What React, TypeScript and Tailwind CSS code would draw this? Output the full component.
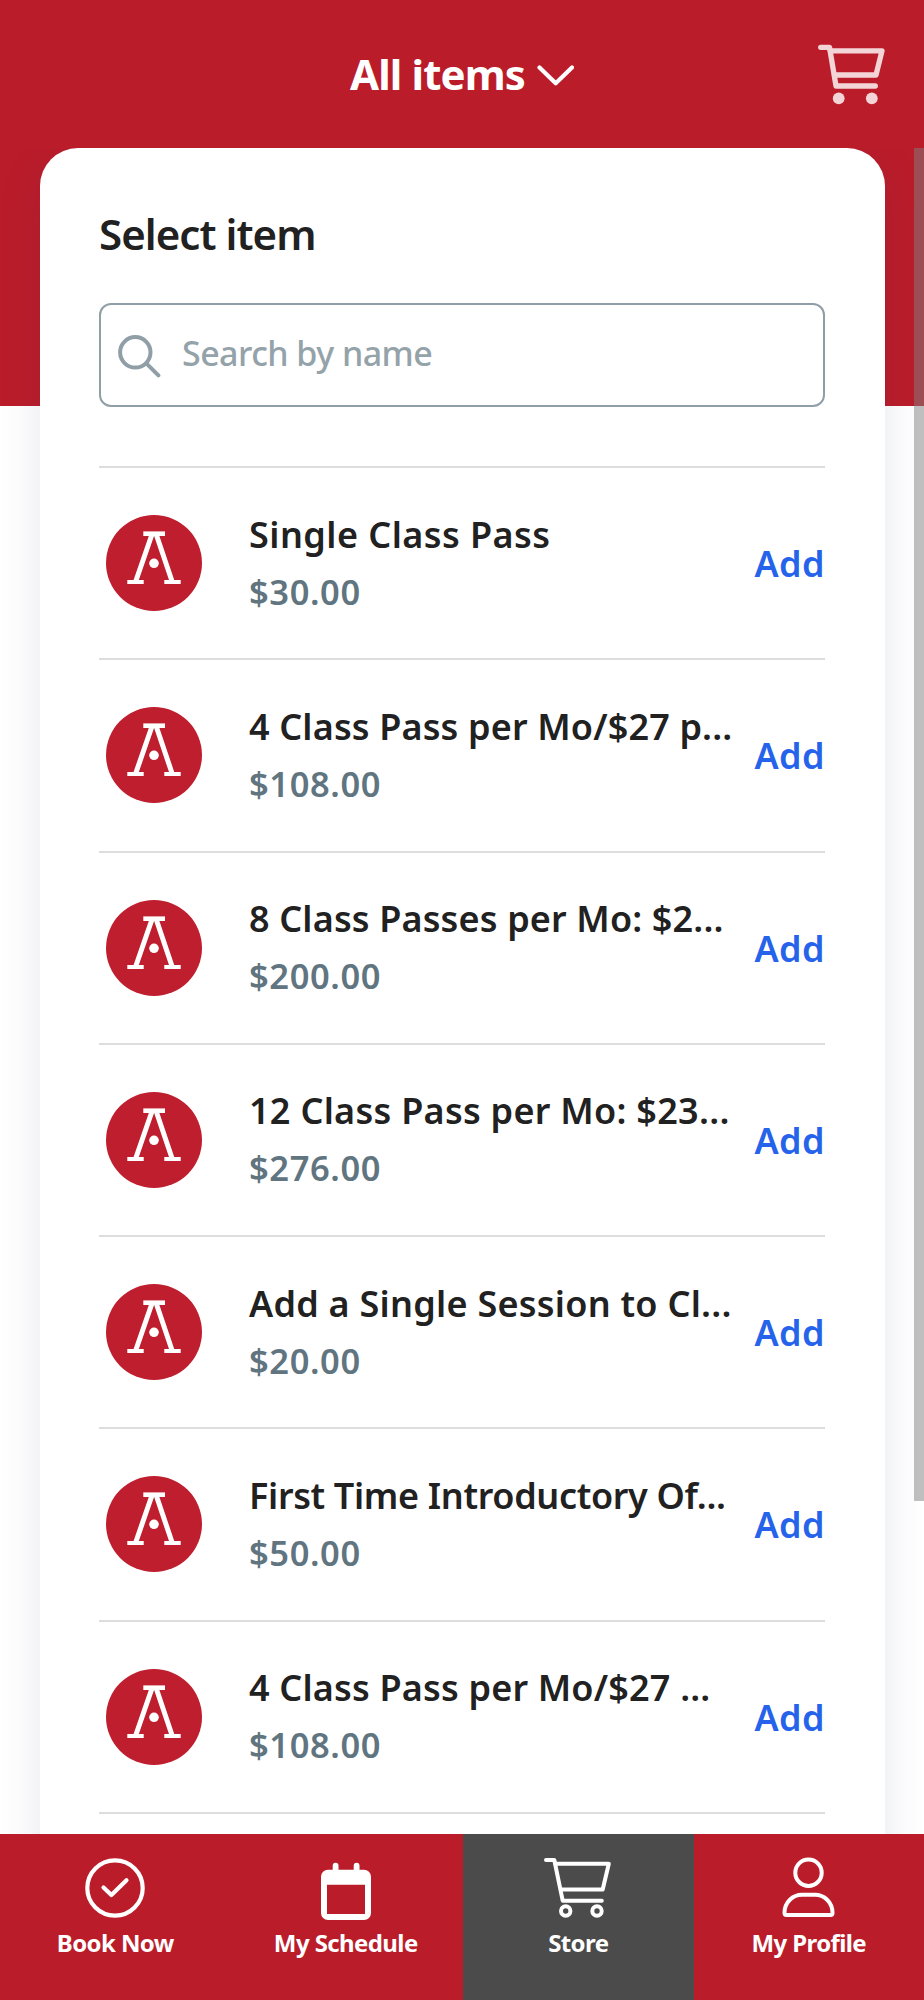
import type { ReactNode } from "react";

interface StoreItem {
  id: number;
  name: string;
  price: string;
  tracking: string;
}

const ITEMS: StoreItem[] = [
  { id: 1, name: "Single Class Pass", price: "$30.00", tracking: "tracking-[0.45px]" },
  { id: 2, name: "4 Class Pass per Mo/$27 p...", price: "$108.00", tracking: "tracking-[0.15px]" },
  { id: 3, name: "8 Class Passes per Mo: $2...", price: "$200.00", tracking: "tracking-[0.15px]" },
  { id: 4, name: "12 Class Pass per Mo: $23...", price: "$276.00", tracking: "tracking-[0.28px]" },
  { id: 5, name: "Add a Single Session to Cl...", price: "$20.00", tracking: "tracking-[0.25px]" },
  { id: 6, name: "First Time Introductory Of...", price: "$50.00", tracking: "tracking-[-0.34px]" },
  { id: 7, name: "4 Class Pass per Mo/$27 ...", price: "$108.00", tracking: "tracking-[0.18px]" },
];

function ChevronIcon() {
  return (
    <svg width="37" height="21" viewBox="0 0 37 21" fill="none" stroke="currentColor" strokeWidth="4.2" strokeLinecap="round" strokeLinejoin="round">
      <path d="M2.5 2.5 18.7 18.3 35 2.5" />
    </svg>
  );
}

function HeaderCartIcon() {
  return (
    <svg width="67" height="62" viewBox="0 0 67 62" fill="none" stroke="currentColor" strokeWidth="5.3" strokeLinecap="round" strokeLinejoin="round">
      <path d="M2.7 3.3H11.5L18 42H57.3" />
      <path d="M12.3 6.8H64L58 31H16.5" />
      <circle cx="20.7" cy="54.3" r="5.9" fill="currentColor" stroke="none" />
      <circle cx="53.8" cy="54.3" r="5.9" fill="currentColor" stroke="none" />
    </svg>
  );
}

function SearchIcon() {
  return (
    <svg className="mt-[7px] shrink-0" width="43" height="43" viewBox="0 0 43 43" fill="none" stroke="currentColor" strokeWidth="4" strokeLinecap="round">
      <circle cx="17.3" cy="17.3" r="15.2" />
      <path d="m28.6 28.6 11.8 11.8" />
    </svg>
  );
}

function StudioLogo() {
  return (
    <svg className="mt-[2px] shrink-0" width="96" height="96" viewBox="0 0 96 96">
      <circle cx="48" cy="48" r="48" fill="#be1e2d" />
      <g fill="none" stroke="#fff">
        <path d="M37.3 18.7H59" strokeWidth="4.6" />
        <path d="M21.3 67H37.7M58.3 67H74.7" strokeWidth="4" />
        <path d="M46.2 18.7 29.5 67M50 18.7 66.3 67" strokeWidth="5" />
      </g>
      <circle cx="48" cy="48.3" r="4.8" fill="#fff" />
    </svg>
  );
}

function BookIcon() {
  return (
    <svg width="60" height="60" viewBox="0 0 60 60" fill="none" stroke="currentColor" strokeWidth="4.2" strokeLinecap="round" strokeLinejoin="round">
      <circle cx="30" cy="30" r="27.7" />
      <path d="m18.5 29.4 7.9 7.6L41.5 22.2" />
    </svg>
  );
}

function CalendarIcon() {
  return (
    <svg width="50" height="64" viewBox="0 -6 50 64">
      <path
        fill="currentColor"
        fillRule="evenodd"
        d="M11.7 7.7V3.7a2.9 2.9 0 0 1 5.8 0V7.7H32.7V3.7a2.9 2.9 0 0 1 5.8 0V7.7H43a7 7 0 0 1 7 7V51a7 7 0 0 1-7 7H7a7 7 0 0 1-7-7V14.7a7 7 0 0 1 7-7ZM6 22.7V52H44V22.7Z"
      />
    </svg>
  );
}

function StoreIcon() {
  return (
    <svg width="68" height="64" viewBox="0 0 68 64" fill="none" stroke="currentColor" strokeWidth="4" strokeLinecap="round" strokeLinejoin="round">
      <path d="M2 4H10.3L18.7 44.7H57.8" />
      <path d="M11.3 7.7H64.8L58.7 33.5H17" />
      <circle cx="21.7" cy="55" r="4.7" />
      <circle cx="53" cy="55" r="4.7" />
    </svg>
  );
}

function ProfileIcon() {
  return (
    <svg width="53" height="62" viewBox="0 0 53 62" fill="none" stroke="currentColor" strokeWidth="4" strokeLinejoin="round">
      <circle cx="26.5" cy="15.7" r="13.2" />
      <path d="M2.5 56C2.5 45 11 37.8 20 37.8H33C42 37.8 50.5 45 50.5 56a2 2 0 0 1-2 2H4.5a2 2 0 0 1-2-2Z" />
    </svg>
  );
}

function ItemRow({ item }: { item: StoreItem }) {
  return (
    <li className="flex h-[192.25px] items-center border-t-2 border-[#dddddd] pb-0.5 pl-[7px]">
      <StudioLogo />
      <div className="mt-[2px] ml-[47px] flex-1 whitespace-nowrap font-semibold">
        <p className={`text-[36px] leading-[52px] text-[#212121] ${item.tracking}`}>{item.name}</p>
        <p className="mt-[5px] text-[34.5px] leading-[52px] tracking-[0.6px] text-[#607580]">
          {item.price}
        </p>
      </div>
      <button className="mt-[4px] text-[36px] leading-[52px] font-semibold tracking-[0.4px] text-[#2563eb]">
        Add
      </button>
    </li>
  );
}

interface TabProps {
  label: string;
  icon: ReactNode;
  active?: boolean;
}

function Tab({ label, icon, active }: TabProps) {
  return (
    <button
      className={`flex flex-1 flex-col items-center pt-[22.5px] ${active ? "ml-[2px] bg-[#4b4b4b]" : ""}`}
    >
      <span className="flex h-[64px] items-center">{icon}</span>
      <span className="mt-[7px] text-[24px] leading-[32px] font-bold tracking-[-0.6px]">{label}</span>
    </button>
  );
}

export default function App() {
  return (
    <div className="flex h-[2000px] w-[924px] flex-col overflow-hidden bg-white font-['Noto_Sans','Open_Sans',sans-serif]">
      <header className="grid h-[148px] shrink-0 grid-cols-[1fr_auto_1fr] items-center bg-[#bb1c2a] text-white">
        <button className="col-start-2 flex items-center gap-3">
          <span className="text-[42px] leading-[50px] font-bold tracking-[-0.9px]">All items</span>
          <span className="mt-0.5">
            <ChevronIcon />
          </span>
        </button>
        <button className="mt-[2px] mr-[39px] justify-self-end text-[#f3d4d7]">
          <HeaderCartIcon />
        </button>
      </header>

      {/* the red band runs behind the top of the card */}
      <main className="relative min-h-0 flex-1 overflow-hidden bg-[linear-gradient(#bb1c2a_258.5px,#fff_258.5px)]">
        <section className="mx-[39.5px] h-[1800px] rounded-t-[38px] bg-white px-[59.5px] pt-[61px] shadow-[0_12px_44px_rgba(50,60,110,0.12)]">
          <h1 className="text-[42px] leading-[50px] font-semibold tracking-[-0.95px] text-[#212121]">
            Select item
          </h1>
          <div className="mt-[44px] flex h-[104px] items-center rounded-[12px] border-[2.5px] border-[#909fa7] pb-[5px] pl-[17px] text-[#909fa7]">
            <SearchIcon />
            <input
              type="text"
              placeholder="Search by name"
              className="ml-[21px] w-full text-[34px] leading-[50px] font-medium tracking-[-0.55px] outline-none placeholder:text-[#94a2a9]"
            />
          </div>
          <ul className="mt-[59px] border-b-2 border-[#dddddd]">
            {ITEMS.map((item) => (
              <ItemRow key={item.id} item={item} />
            ))}
          </ul>
        </section>
        <div className="absolute top-0 right-0 h-[1353px] w-[10px] bg-[#808080]/50" />
      </main>

      <nav className="flex h-[166.5px] shrink-0 bg-[#bb1c2a] text-white">
        <Tab label="Book Now" icon={<BookIcon />} />
        <Tab label="My Schedule" icon={<CalendarIcon />} />
        <Tab label="Store" icon={<StoreIcon />} active />
        <Tab label="My Profile" icon={<ProfileIcon />} />
      </nav>
    </div>
  );
}
